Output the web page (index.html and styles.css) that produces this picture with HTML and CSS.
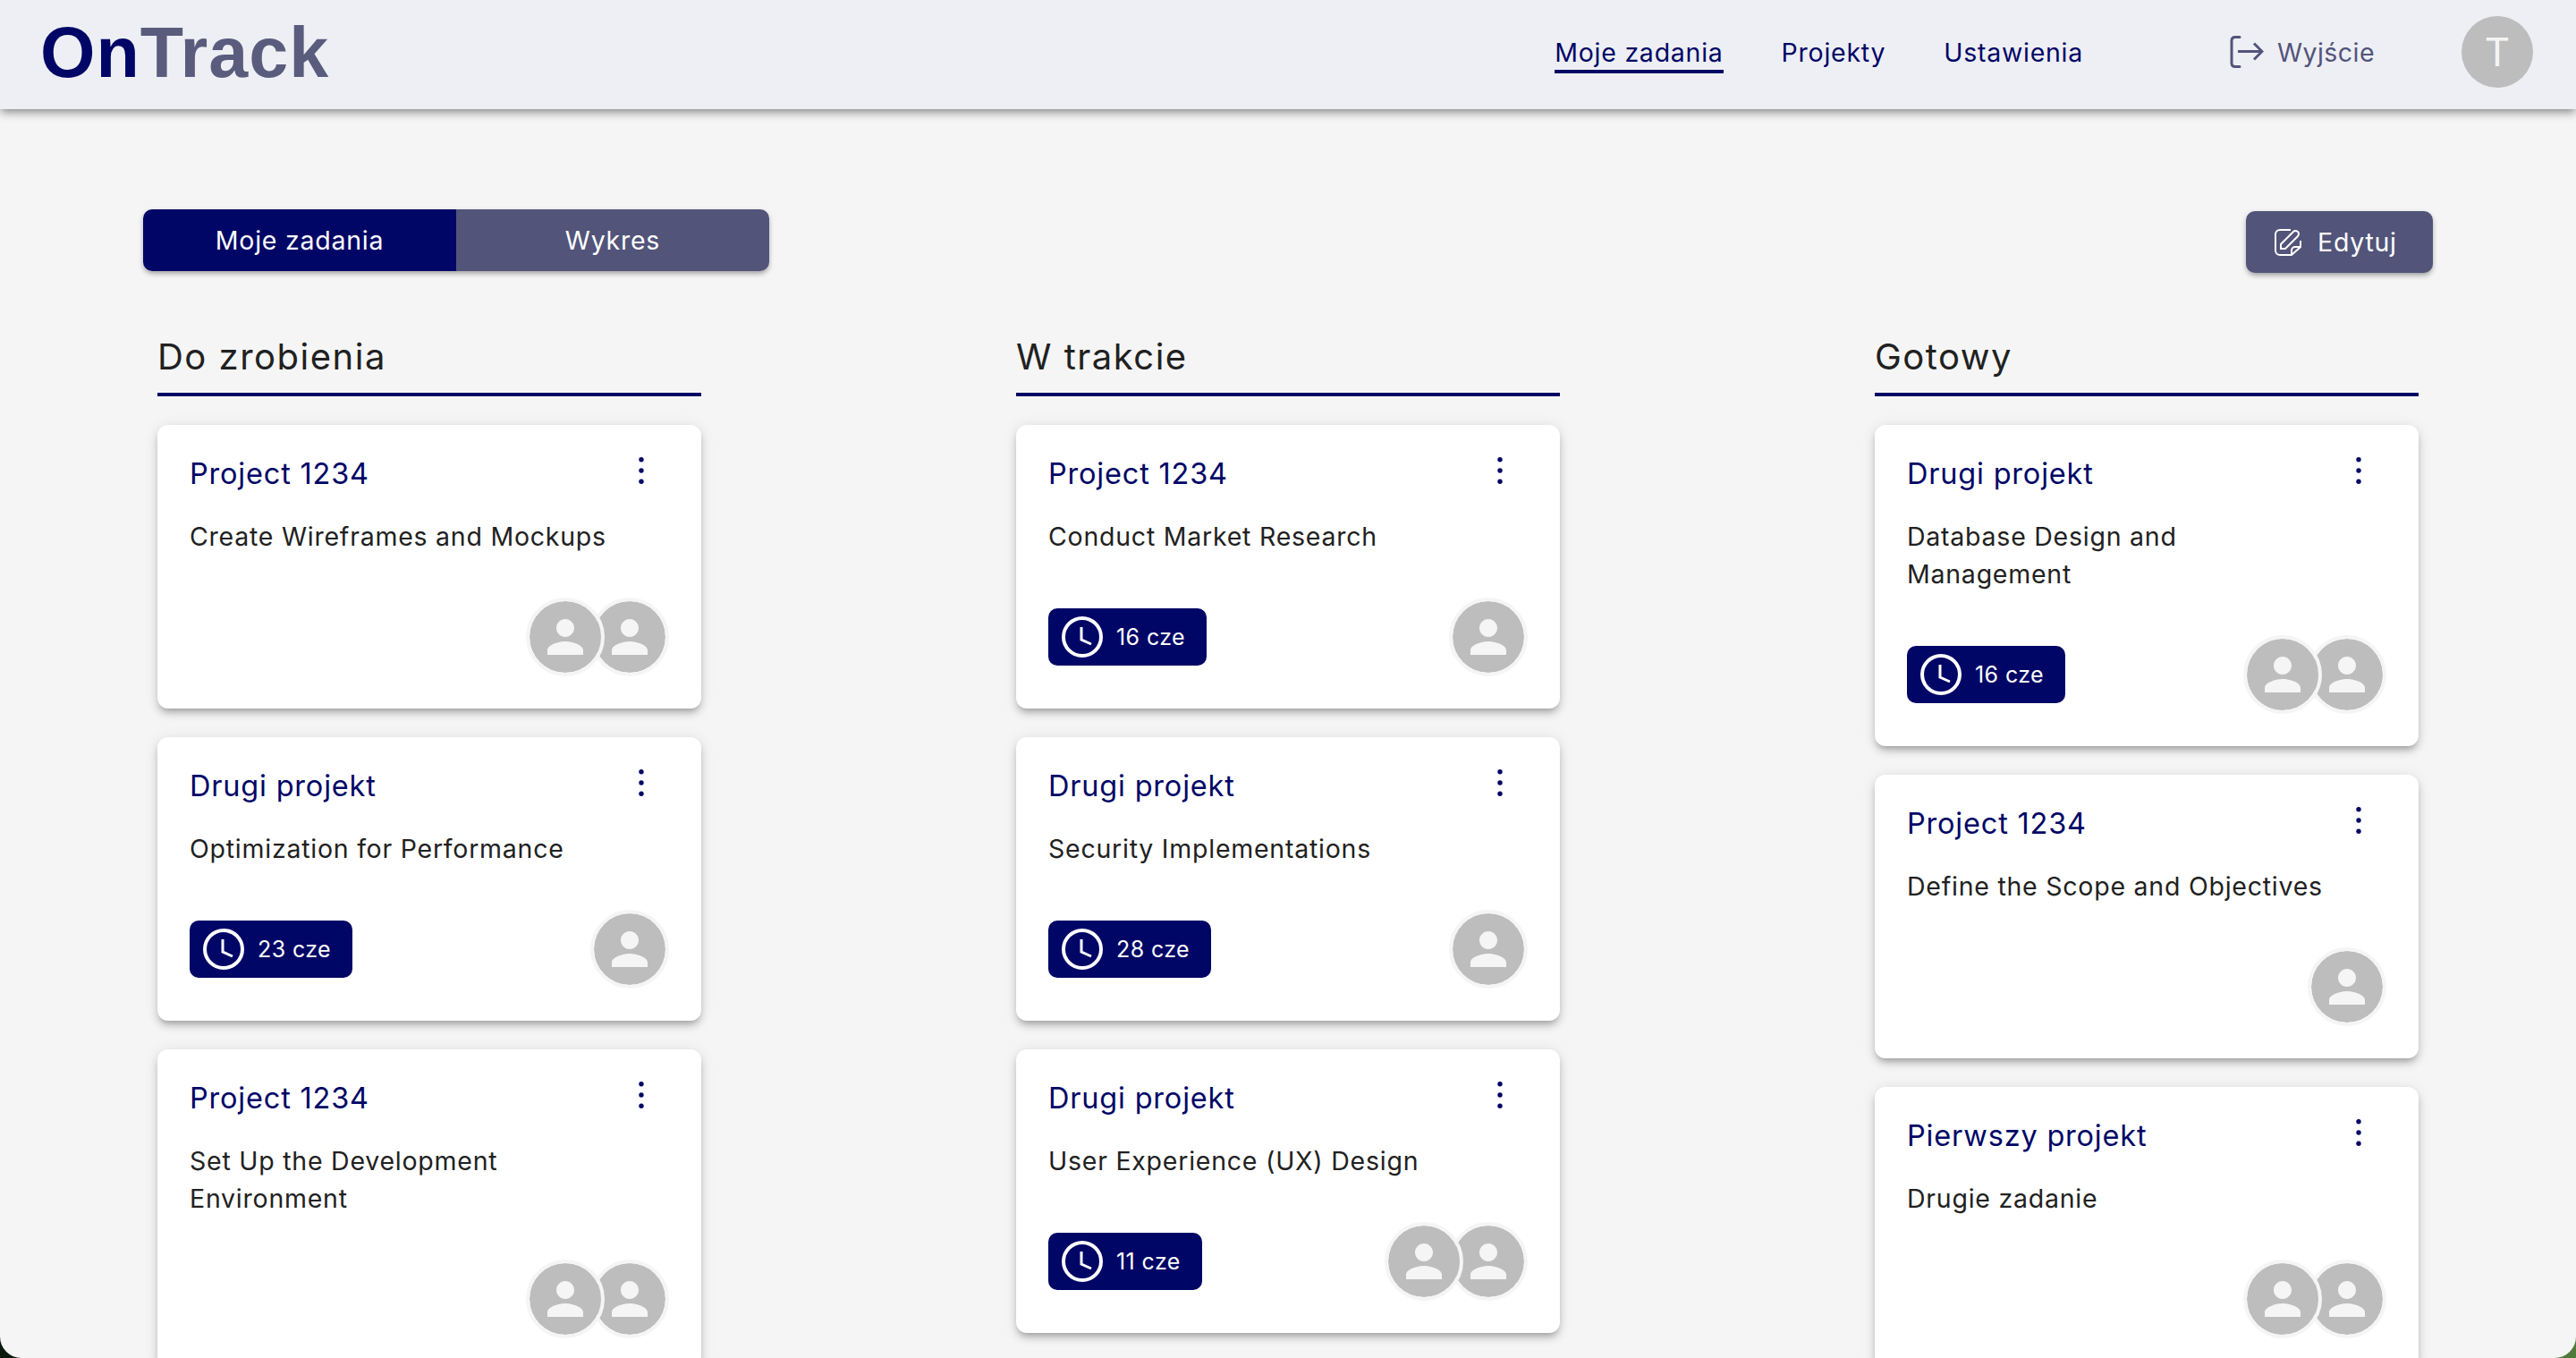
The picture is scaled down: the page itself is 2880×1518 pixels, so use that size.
FILE: index.html
```html
<!DOCTYPE html>
<html lang="pl">
<head>
    <meta charset="UTF-8">
    <meta name="viewport" content="width=device-width, initial-scale=1.0">
    <title>OnTrack</title>
    <link rel="stylesheet" href="styles.css">
</head>
<body>
    <!-- Shared icons -->
    <svg class="icon-defs" aria-hidden="true">
        <symbol id="icon-person" viewBox="0 0 24 24">
            <path d="M12 12c2.21 0 4-1.79 4-4s-1.79-4-4-4-4 1.79-4 4 1.79 4 4 4zm0 2c-2.67 0-8 1.34-8 4v2h16v-2c0-2.66-5.33-4-8-4z"/>
        </symbol>
        <symbol id="icon-dots" viewBox="0 0 30 30">
            <circle cx="15" cy="2.700" r="2.700"/>
            <circle cx="15" cy="15" r="2.700"/>
            <circle cx="15" cy="27.300" r="2.700"/>
        </symbol>
        <symbol id="icon-clock" viewBox="0 0 48 48">
            <circle cx="24" cy="24" r="21" fill="none" stroke="currentColor" stroke-width="4"/>
            <path d="M23 13v14l11 5" fill="none" stroke="currentColor" stroke-width="3"/>
        </symbol>
    </svg>

    <div class="app">
        <header class="topbar">
            <div class="logo"><span class="logo-on">On</span>Track</div>
            <nav class="nav">
                <a class="nav-link active" href="#">Moje zadania</a>
                <a class="nav-link" href="#">Projekty</a>
                <a class="nav-link" href="#">Ustawienia</a>
            </nav>
            <a class="logout" href="#">
                <svg class="logout-icon" viewBox="0 0 38 36" fill="none" stroke="currentColor" stroke-width="3">
                    <path d="M11 1.500H6Q2 1.500 2 5.500V30.500Q2 34.500 6 34.500H11" stroke-linecap="round"/>
                    <path d="M9 17.500H35M27 8.500L36 17.500L27 26.500"/>
                </svg>
                Wyjście
            </a>
            <div class="user-avatar">T</div>
        </header>

        <main class="main">
            <div class="toolbar">
                <div class="switch">
                    <button class="switch-btn selected" type="button">Moje zadania</button>
                    <button class="switch-btn" type="button">Wykres</button>
                </div>
                <button class="edit-btn" type="button">
                    <svg class="edit-icon" viewBox="0 0 30 30" fill="none" stroke="currentColor" stroke-width="2">
                        <path d="M18 1H6A5 5 0 0 0 1 6V24A5 5 0 0 0 6 29H19L29 20V13"/>
                        <path d="M19 29V24A4 4 0 0 1 23 20H29"/>
                        <path d="M7 22V17L21 3Q23 1 26 3Q28 5 26 8L12 22Z"/>
                    </svg>
                    Edytuj
                </button>
            </div>

            <div class="board">
                <!-- Do zrobienia -->
                <section class="column">
                    <h2 class="column-title">Do zrobienia</h2>

                    <article class="card">
                        <div class="card-head">
                            <h3 class="card-title">Project 1234</h3>
                            <svg class="card-menu"><use href="#icon-dots"/></svg>
                        </div>
                        <p class="card-text">Create Wireframes and Mockups</p>
                        <div class="card-foot">
                            <div class="people">
                                <span class="person"><svg><use href="#icon-person"/></svg></span>
                                <span class="person"><svg><use href="#icon-person"/></svg></span>
                            </div>
                        </div>
                    </article>

                    <article class="card">
                        <div class="card-head">
                            <h3 class="card-title">Drugi projekt</h3>
                            <svg class="card-menu"><use href="#icon-dots"/></svg>
                        </div>
                        <p class="card-text">Optimization for Performance</p>
                        <div class="card-foot">
                            <span class="due"><svg class="due-icon"><use href="#icon-clock"/></svg>23 cze</span>
                            <div class="people">
                                <span class="person"><svg><use href="#icon-person"/></svg></span>
                            </div>
                        </div>
                    </article>

                    <article class="card">
                        <div class="card-head">
                            <h3 class="card-title">Project 1234</h3>
                            <svg class="card-menu"><use href="#icon-dots"/></svg>
                        </div>
                        <p class="card-text">Set Up the Development Environment</p>
                        <div class="card-foot">
                            <div class="people">
                                <span class="person"><svg><use href="#icon-person"/></svg></span>
                                <span class="person"><svg><use href="#icon-person"/></svg></span>
                            </div>
                        </div>
                    </article>
                </section>

                <!-- W trakcie -->
                <section class="column">
                    <h2 class="column-title">W trakcie</h2>

                    <article class="card">
                        <div class="card-head">
                            <h3 class="card-title">Project 1234</h3>
                            <svg class="card-menu"><use href="#icon-dots"/></svg>
                        </div>
                        <p class="card-text">Conduct Market Research</p>
                        <div class="card-foot">
                            <span class="due"><svg class="due-icon"><use href="#icon-clock"/></svg>16 cze</span>
                            <div class="people">
                                <span class="person"><svg><use href="#icon-person"/></svg></span>
                            </div>
                        </div>
                    </article>

                    <article class="card">
                        <div class="card-head">
                            <h3 class="card-title">Drugi projekt</h3>
                            <svg class="card-menu"><use href="#icon-dots"/></svg>
                        </div>
                        <p class="card-text">Security Implementations</p>
                        <div class="card-foot">
                            <span class="due"><svg class="due-icon"><use href="#icon-clock"/></svg>28 cze</span>
                            <div class="people">
                                <span class="person"><svg><use href="#icon-person"/></svg></span>
                            </div>
                        </div>
                    </article>

                    <article class="card">
                        <div class="card-head">
                            <h3 class="card-title">Drugi projekt</h3>
                            <svg class="card-menu"><use href="#icon-dots"/></svg>
                        </div>
                        <p class="card-text">User Experience (UX) Design</p>
                        <div class="card-foot">
                            <span class="due"><svg class="due-icon"><use href="#icon-clock"/></svg>11 cze</span>
                            <div class="people">
                                <span class="person"><svg><use href="#icon-person"/></svg></span>
                                <span class="person"><svg><use href="#icon-person"/></svg></span>
                            </div>
                        </div>
                    </article>
                </section>

                <!-- Gotowy -->
                <section class="column">
                    <h2 class="column-title">Gotowy</h2>

                    <article class="card">
                        <div class="card-head">
                            <h3 class="card-title">Drugi projekt</h3>
                            <svg class="card-menu"><use href="#icon-dots"/></svg>
                        </div>
                        <p class="card-text">Database Design and Management</p>
                        <div class="card-foot">
                            <span class="due"><svg class="due-icon"><use href="#icon-clock"/></svg>16 cze</span>
                            <div class="people">
                                <span class="person"><svg><use href="#icon-person"/></svg></span>
                                <span class="person"><svg><use href="#icon-person"/></svg></span>
                            </div>
                        </div>
                    </article>

                    <article class="card">
                        <div class="card-head">
                            <h3 class="card-title">Project 1234</h3>
                            <svg class="card-menu"><use href="#icon-dots"/></svg>
                        </div>
                        <p class="card-text">Define the Scope and Objectives</p>
                        <div class="card-foot">
                            <div class="people">
                                <span class="person"><svg><use href="#icon-person"/></svg></span>
                            </div>
                        </div>
                    </article>

                    <article class="card">
                        <div class="card-head">
                            <h3 class="card-title">Pierwszy projekt</h3>
                            <svg class="card-menu"><use href="#icon-dots"/></svg>
                        </div>
                        <p class="card-text">Drugie zadanie</p>
                        <div class="card-foot">
                            <div class="people">
                                <span class="person"><svg><use href="#icon-person"/></svg></span>
                                <span class="person"><svg><use href="#icon-person"/></svg></span>
                            </div>
                        </div>
                    </article>
                </section>
            </div>
        </main>
    </div>
</body>
</html>
```

FILE: styles.css
```css
/* Desktop wallpaper shows in the rounded bottom corners */
body {
    margin: 0;
    height: 100vh;
    overflow: hidden;
    font-family: Inter, "Open Sans", sans-serif;
    background: linear-gradient(90deg, #0a1a0c 0%, #4f7a3c 100%);
}

.icon-defs {
    display: none;
}

.app {
    height: 100vh;
    overflow: hidden;
    background-color: #f5f5f5;
    border-radius: 0 0 24px 24px;
}

/* Top bar */
.topbar {
    position: relative;
    z-index: 1;
    display: flex;
    align-items: center;
    height: 122px;
    padding: 0 48px 0 45px;
    box-sizing: border-box;
    background-color: #eeeff4;
    box-shadow: 0 4px 8px -2px rgba(0, 0, 0, 0.3), 0 6px 10px rgba(0, 0, 0, 0.14), 0 2px 14px rgba(0, 0, 0, 0.08);
}

.logo {
    margin-bottom: 5px;
    font-family: "Liberation Sans", Arial, sans-serif;
    font-size: 79px;
    font-weight: 700;
    line-height: 1;
    letter-spacing: 1px;
    color: #5a5c7e;
}

.logo-on {
    color: #000666;
}

.nav {
    display: flex;
    gap: 65px;
    margin-left: auto;
}

.nav-link {
    padding-bottom: 1px;
    font-size: 28.5px;
    letter-spacing: 0.75px;
    line-height: 36px;
    color: #000666;
    text-decoration: none;
    border-bottom: 4px solid transparent;
}

.nav-link.active {
    border-bottom-color: #000666;
}

.logout {
    display: flex;
    align-items: center;
    gap: 15px;
    margin-left: 164px;
    margin-bottom: 6px;
    font-size: 28.5px;
    letter-spacing: 0.45px;
    color: #52547a;
    text-decoration: none;
}

.logout-icon {
    width: 38px;
    height: 36px;
}

.user-avatar {
    display: flex;
    align-items: center;
    justify-content: center;
    width: 80px;
    height: 80px;
    margin-left: 97px;
    margin-bottom: 6px;
    font-size: 44px;
    color: #f5f5f5;
    background-color: #bdbdbd;
    border-radius: 50%;
}

/* Main area */
.main {
    padding: 112px 160px 0;
}

.toolbar {
    display: flex;
    align-items: flex-start;
    justify-content: space-between;
}

.switch {
    display: flex;
    width: 700px;
    height: 69px;
    overflow: hidden;
    border-radius: 10px;
    box-shadow: 0 4px 6px -2px rgba(0, 0, 0, 0.3), 0 2px 6px rgba(0, 0, 0, 0.14);
}

.switch-btn {
    flex: 1;
    padding: 0;
    font-family: inherit;
    font-size: 28.5px;
    letter-spacing: 0.75px;
    color: #ffffff;
    background-color: #52547a;
    border: none;
}

.switch-btn.selected {
    background-color: #000666;
}

.edit-btn {
    display: flex;
    align-items: center;
    gap: 18px;
    width: 209px;
    height: 69px;
    margin-top: 2px;
    padding: 0 0 0 32px;
    box-sizing: border-box;
    font-family: inherit;
    font-size: 28.5px;
    letter-spacing: 0.75px;
    color: #ffffff;
    background-color: #52547a;
    border: none;
    border-radius: 10px;
    box-shadow: 0 4px 6px -2px rgba(0, 0, 0, 0.3), 0 2px 6px rgba(0, 0, 0, 0.14);
}

.edit-icon {
    width: 30px;
    height: 30px;
}

/* Kanban columns */
.board {
    display: flex;
    justify-content: space-between;
    padding: 0 16px;
    margin-top: 58px;
}

.column {
    width: 608px;
}

.column-title {
    margin: 0 0 32px;
    padding: 4px 0 8px;
    font-size: 40px;
    font-weight: 400;
    line-height: 64px;
    letter-spacing: 1.5px;
    color: #212121;
    border-bottom: 4px solid #000666;
}

.card {
    display: flex;
    flex-direction: column;
    margin-bottom: 32px;
    padding: 36px;
    background-color: #ffffff;
    border-radius: 12px;
    box-shadow: 0 6px 6px -4px rgba(0, 0, 0, 0.2), 0 6px 8px rgba(0, 0, 0, 0.14), 0 2px 16px rgba(0, 0, 0, 0.1);
}

.card-head {
    display: flex;
    align-items: flex-start;
    justify-content: space-between;
    height: 68px;
}

.card-title {
    margin: 0;
    font-size: 32.5px;
    font-weight: 400;
    line-height: 37px;
    letter-spacing: 0.8px;
    color: #000666;
}

.card-menu {
    width: 30px;
    height: 30px;
    margin-right: 16px;
    fill: #000666;
}

.card-text {
    max-width: 480px;
    margin: 0;
    font-size: 28.5px;
    line-height: 42px;
    letter-spacing: 0.76px;
    color: #212121;
}

.card-foot {
    display: flex;
    align-items: center;
    justify-content: space-between;
    margin-top: 47px;
}

.due {
    display: flex;
    align-items: center;
    gap: 14px;
    height: 64px;
    padding: 0 24px 0 14px;
    font-size: 25px;
    letter-spacing: 0.4px;
    color: #ffffff;
    background-color: #000666;
    border-radius: 10px;
}

.due-icon {
    width: 48px;
    height: 48px;
}

/* Overlapping avatars, first one on top */
.people {
    display: flex;
    margin-left: auto;
}

.person {
    display: flex;
    align-items: center;
    justify-content: center;
    width: 88px;
    height: 88px;
    box-sizing: border-box;
    background-color: #bdbdbd;
    background-clip: padding-box;
    border: 4px solid #f5f5f5;
    border-radius: 50%;
}

.person:first-child {
    position: relative;
    z-index: 1;
}

.person + .person {
    margin-left: -16px;
}

.person svg {
    width: 60px;
    height: 60px;
    fill: #f5f5f5;
}
```
